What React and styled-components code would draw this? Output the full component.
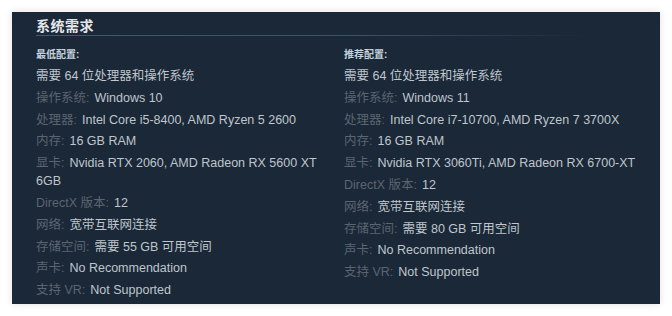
import styled, { createGlobalStyle } from 'styled-components';

const GlobalStyle = createGlobalStyle`
  html, body {
    margin: 0;
    padding: 0;
    background: #ffffff;
  }
  body {
    font-family: "Liberation Sans", Arial, "Noto Sans CJK SC", sans-serif;
  }
`;

const Page = styled.div`
  padding: 12px;
`;

const Panel = styled.section`
  width: 648px;
  height: 292px;
  box-sizing: border-box;
  background: #1b2838;
  box-shadow: 0 0 8px rgba(0, 0, 0, 0.12);
  padding: 0 24px;
  overflow: hidden;
`;

const Title = styled.h2`
  margin: 0;
  padding-top: 3px;
  height: 20px;
  font-size: 14px;
  line-height: 20px;
  font-weight: bold;
  color: #e5e8ea;
  font-family: "Noto Sans CJK SC", sans-serif;
  letter-spacing: 0.5px;
`;

const Rule = styled.div`
  height: 1px;
  width: 554px;
  background: linear-gradient(to right, #3b5c70 0%, #35526a 60%, rgba(53, 82, 106, 0) 100%);
`;

const Columns = styled.div`
  display: grid;
  grid-template-columns: 300px 300px;
  column-gap: 8px;
  padding-top: 12px;
`;

const Column = styled.div`
  display: flex;
  flex-direction: column;
`;

const Heading = styled.div`
  font-size: 10px;
  line-height: 14px;
  font-weight: bold;
  color: #c6d4df;
  font-family: "Liberation Sans", "Noto Sans CJK SC", sans-serif;
  margin-bottom: 5px;
`;

const List = styled.ul`
  list-style: none;
  margin: 0;
  padding: 0;
`;

const Item = styled.li`
  font-size: 12.5px;
  line-height: 18px;
  margin-bottom: 3.8px;
  color: #bfc6cc;
  font-family: "Liberation Sans", "Noto Sans CJK SC", sans-serif;
`;

const Label = styled.span`
  color: #5a6571;
  margin-right: 5px;
`;

const minimum = [
  ['操作系统:', 'Windows 10'],
  ['处理器:', 'Intel Core i5-8400, AMD Ryzen 5 2600'],
  ['内存:', '16 GB RAM'],
  ['显卡:', 'Nvidia RTX 2060, AMD Radeon RX 5600 XT 6GB'],
  ['DirectX 版本:', '12'],
  ['网络:', '宽带互联网连接'],
  ['存储空间:', '需要 55 GB 可用空间'],
  ['声卡:', 'No Recommendation'],
  ['支持 VR:', 'Not Supported'],
];

const recommended = [
  ['操作系统:', 'Windows 11'],
  ['处理器:', 'Intel Core i7-10700, AMD Ryzen 7 3700X'],
  ['内存:', '16 GB RAM'],
  ['显卡:', 'Nvidia RTX 3060Ti, AMD Radeon RX 6700-XT'],
  ['DirectX 版本:', '12'],
  ['网络:', '宽带互联网连接'],
  ['存储空间:', '需要 80 GB 可用空间'],
  ['声卡:', 'No Recommendation'],
  ['支持 VR:', 'Not Supported'],
];

function ReqColumn({ heading, rows }) {
  return (
    <Column>
      <Heading>{heading}</Heading>
      <List>
        <Item>需要 64 位处理器和操作系统</Item>
        {rows.map(([label, value]) => (
          <Item key={label}>
            <Label>{label}</Label>
            {value}
          </Item>
        ))}
      </List>
    </Column>
  );
}

export default function App() {
  return (
    <>
      <GlobalStyle />
      <Page>
        <Panel>
          <Title>系统需求</Title>
          <Rule />
          <Columns>
            <ReqColumn heading="最低配置:" rows={minimum} />
            <ReqColumn heading="推荐配置:" rows={recommended} />
          </Columns>
        </Panel>
      </Page>
    </>
  );
}
